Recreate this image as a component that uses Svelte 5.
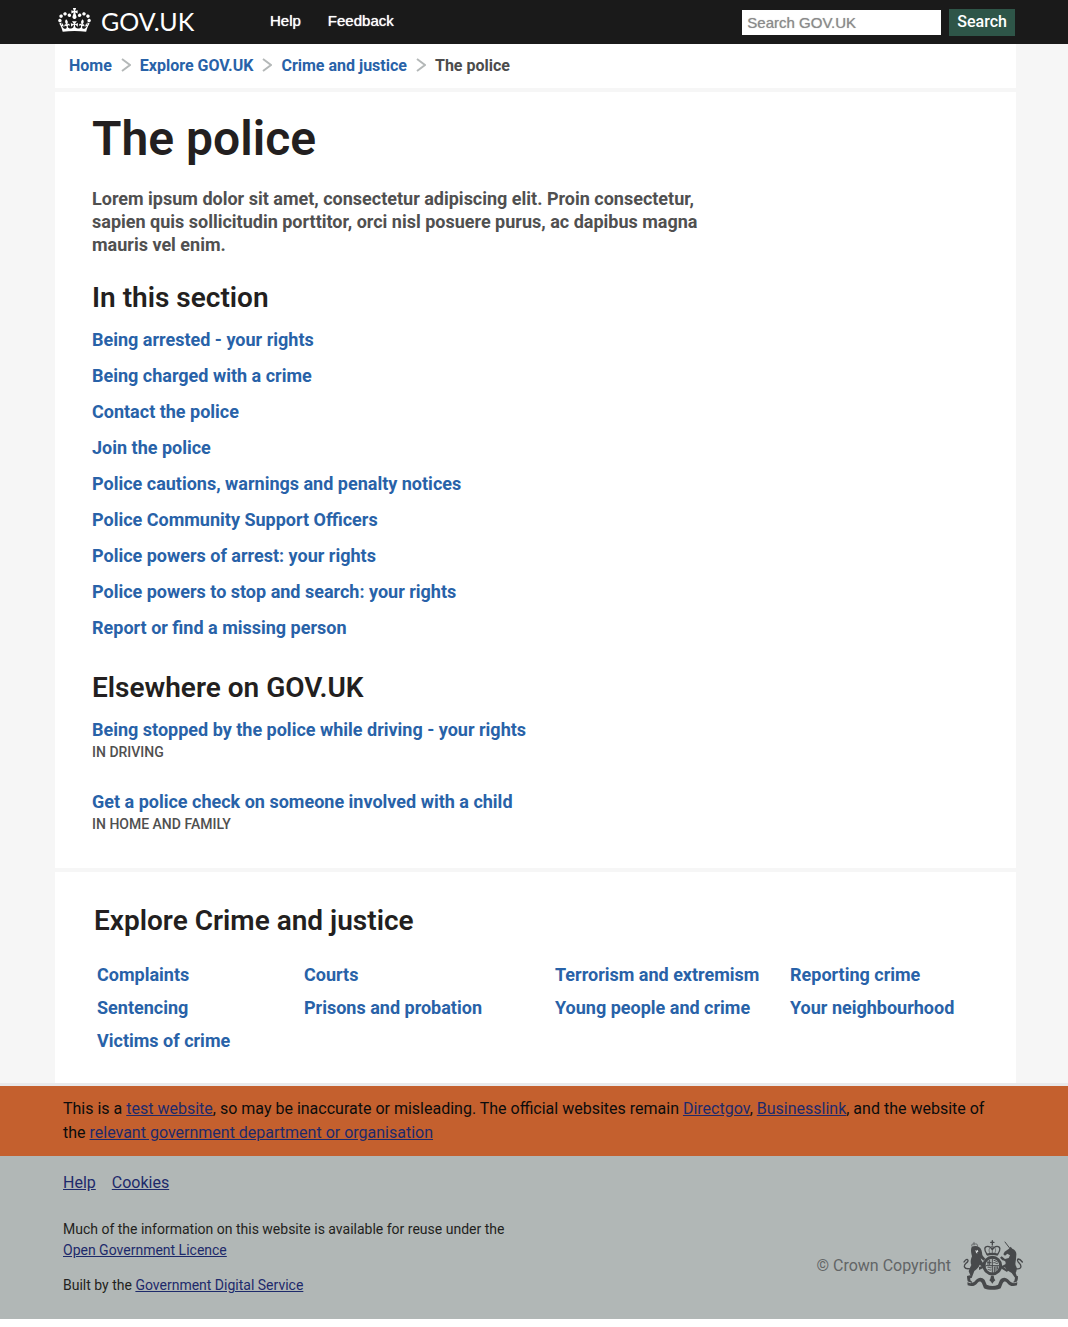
<script>
  const crumbs = ['Home', 'Explore GOV.UK', 'Crime and justice'];
  const section = [
    'Being arrested - your rights',
    'Being charged with a crime',
    'Contact the police',
    'Join the police',
    'Police cautions, warnings and penalty notices',
    'Police Community Support Officers',
    'Police powers of arrest: your rights',
    'Police powers to stop and search: your rights',
    'Report or find a missing person',
  ];
  const elsewhere = [
    { title: 'Being stopped by the police while driving - your rights', place: 'In driving' },
    { title: 'Get a police check on someone involved with a child', place: 'In home and family' },
  ];
  const topics = [
    'Complaints', 'Courts', 'Terrorism and extremism', 'Reporting crime',
    'Sentencing', 'Prisons and probation', 'Young people and crime', 'Your neighbourhood',
    'Victims of crime',
  ];
</script>

<header class="top">
  <a class="logo" href="#home">
    <svg class="crown" viewBox="0 0 132 97" aria-hidden="true">
      <path d="M25 30.2c3.5 1.5 7.7-.2 9.1-3.7 1.5-3.6-.2-7.8-3.9-9.2-3.6-1.4-7.6.3-9.1 3.9-1.4 3.5.3 7.5 3.9 9zM9 39.5c3.6 1.5 7.8-.2 9.2-3.7 1.5-3.6-.2-7.8-3.9-9.1-3.6-1.5-7.6.2-9.1 3.8-1.4 3.5.3 7.5 3.8 9zM4.4 57.2c3.5 1.5 7.7-.2 9.1-3.8 1.5-3.6-.2-7.7-3.9-9.1-3.5-1.5-7.6.3-9.1 3.8-1.4 3.5.3 7.6 3.9 9.1zm38.3-21.4c3.5 1.5 7.7-.2 9.1-3.8 1.5-3.6-.2-7.7-3.9-9.1-3.6-1.5-7.6.3-9.1 3.8-1.3 3.6.4 7.7 3.9 9.1zm64.4-5.6c-3.6 1.5-7.8-.2-9.1-3.7-1.5-3.6.2-7.8 3.8-9.2 3.6-1.4 7.7.3 9.2 3.9 1.3 3.5-.4 7.5-3.9 9zm15.9 9.3c-3.6 1.5-7.7-.2-9.1-3.7-1.5-3.6.2-7.8 3.7-9.1 3.6-1.5 7.7.2 9.2 3.8 1.5 3.5-.3 7.5-3.8 9zm4.7 17.7c-3.6 1.5-7.8-.2-9.2-3.8-1.5-3.6.2-7.7 3.9-9.1 3.6-1.5 7.7.3 9.2 3.8 1.3 3.5-.4 7.6-3.9 9.1zM89.3 35.8c-3.6 1.5-7.8-.2-9.2-3.8-1.4-3.6.2-7.7 3.9-9.1 3.6-1.5 7.7.3 9.2 3.8 1.4 3.6-.3 7.7-3.9 9.1zM69.7 17.7l8.9 4.7V9.3l-8.9 2.8c-.2-.3-.5-.6-.9-.9L72.4 0H59.6l3.5 11.2c-.3.3-.6.5-.9.9l-8.8-2.8v13.1l8.8-4.7c.3.3.6.7.9.9l-5 15.4v.1c-.2.8-.4 1.6-.4 2.4 0 4.1 3.1 7.5 7 8.1h.2c.3 0 .7.1 1 .1.4 0 .7 0 1-.1h.2c4-.6 7.1-4.1 7.1-8.1 0-.8-.1-1.7-.4-2.4V34l-5.1-15.4c.4-.2.7-.6 1-.9zM66 92.8c16.9 0 32.8 1.1 47.1 3.2 4-16.9 8.9-26.7 14-33.5l-9.6-3.4c1 4.9 1.1 7.2 0 10.2-1.5-1.4-3-4.3-4.2-8.7L108.6 76c2.8-2 5-3.2 7.5-3.3-4.4 9.4-10 11.9-13.6 11.2-4.3-.8-6.3-4.6-5.6-7.9 1-4.7 5.7-5.9 8-.5 4.3-8.7-3-11.4-7.6-8.8 7.1-7.2 7.9-13.5 2.1-21.1-8 6.1-8.1 12.3-4.5 20.8-4.7-5.4-12.1-2.5-9.5 6.2 3.4-5.2 7.9-2 7.2 3.1-.6 4.3-6.4 7.8-13.5 7.2-10.3-.9-10.9-8-11.2-13.8 2.5-.5 7.1 1.8 11 7.3L80.2 60c-4.1 4.4-8 5.3-12.3 5.4 1.4-4.4 8-11.6 8-11.6H55.5s6.4 7.2 7.9 11.6c-4.2-.1-8-1-12.3-5.4l1.4 16.4c3.9-5.5 8.5-7.7 10.9-7.3-.3 5.8-.9 12.8-11.1 13.8-7.2.6-12.9-2.9-13.5-7.2-.7-5 3.8-8.3 7.1-3.1 2.7-8.7-4.6-11.6-9.4-6.2 3.7-8.5 3.6-14.7-4.6-20.8-5.8 7.6-5 13.9 2.2 21.1-4.7-2.6-11.9.1-7.7 8.8 2.3-5.5 7.1-4.2 8.1.5.7 3.3-1.3 7.1-5.7 7.9-3.5.7-9-1.8-13.5-11.2 2.5.1 4.7 1.3 7.5 3.3l-4.7-15.4c-1.2 4.4-2.7 7.2-4.3 8.7-1.1-3-.9-5.3 0-10.2l-9.5 3.4c5 6.9 9.9 16.7 14 33.5 14.8-2.1 30.8-3.2 47.7-3.2z" />
    </svg>
    <span>GOV.UK</span>
  </a>
  <nav class="help" aria-label="Support">
    <a href="#help">Help</a>
    <a href="#feedback">Feedback</a>
  </nav>
  <form class="search" onsubmit={(e) => e.preventDefault()}>
    <input type="search" aria-label="Search GOV.UK" placeholder="Search GOV.UK" />
    <button type="submit">Search</button>
  </form>
</header>

<div class="page">
  <nav class="crumbs" aria-label="Breadcrumb">
    <ol>
      {#each crumbs as crumb}
        <li>
          <a href="#crumb">{crumb}</a>
          <svg viewBox="0 0 10 14" aria-hidden="true"><path d="M1 1l8 6-8 6" /></svg>
        </li>
      {/each}
      <li aria-current="page">The police</li>
    </ol>
  </nav>

  <main>
    <h1>The police</h1>
    <p class="intro">
      Lorem ipsum dolor sit amet, consectetur adipiscing elit. Proin consectetur, sapien quis
      sollicitudin porttitor, orci nisl posuere purus, ac dapibus magna mauris vel enim.
    </p>
    <h2>In this section</h2>
    <ul class="links">
      {#each section as title}
        <li><a href="#guide">{title}</a></li>
      {/each}
    </ul>
    <h2>Elsewhere on GOV.UK</h2>
    <ul class="elsewhere">
      {#each elsewhere as item}
        <li>
          <a href="#guide">{item.title}</a>
          <span>{item.place}</span>
        </li>
      {/each}
    </ul>
  </main>

  <section class="explore">
    <h2>Explore Crime and justice</h2>
    <ul>
      {#each topics as topic}
        <li><a href="#topic">{topic}</a></li>
      {/each}
    </ul>
  </section>
</div>

<aside class="notice">
  <p>
    This is a <a href="#test">test website</a>, so may be inaccurate or misleading. The official
    websites remain <a href="#directgov">Directgov</a>, <a href="#businesslink">Businesslink</a>,
    and the website of the <a href="#department">relevant government department or organisation</a>
  </p>
</aside>

<footer>
  <div class="info">
    <nav aria-label="Footer">
      <a href="#help">Help</a>
      <a href="#cookies">Cookies</a>
    </nav>
    <p>
      Much of the information on this website is available for reuse under the
      <a href="#licence">Open Government Licence</a>
    </p>
    <p>Built by the <a href="#gds">Government Digital Service</a></p>
  </div>
  <div class="copyright">
    <span>© Crown Copyright</span>
    <svg viewBox="39 30 180 150" aria-hidden="true">
      <g fill="none" stroke="#47494b" stroke-width="4" stroke-linecap="round" stroke-linejoin="round">
        <!-- crown -->
        <path d="M127 32v12M122 37h10M111 73c-10-14-8-24 2-24 8 0 12 6 14 10 2-4 6-10 14-10 10 0 12 10 2 24" />
        <path d="M120 70c-5-9-4-16 7-22 11 6 12 13 7 22M127 48v22" stroke-width="2" />
        <!-- shield -->
        <circle cx="127" cy="107" r="25" stroke-width="9" />
        <path d="M127 86v42M108 107h38M114 93v11M119 90v14M113 98h10M132 91c5 0 7 5 10 5M131 98c5-2 7 4 11 3M114 112c4-2 5 3 9 1M114 119c4-2 5 3 9 1M133 111v14M138 110v13M143 110v7" stroke-width="3" />
        <!-- tails -->
        <path d="M58 116c-17 2-18-9-10-16 5-4 9-9 3-12-4-1-7 5-9 8" />
        <path d="M197 116c19 4 18-9 11-16-6-6-7-12-3-13 5 0 9 5 12 9" />
        <!-- small lion crown and unicorn horn -->
        <path d="M66 49c-3-7 1-8 8-7 7-1 10 1 8 7M72 37v8" stroke-width="2" />
        <path d="M165 36l16 21" stroke-width="3" />
        <!-- hind legs -->
        <path d="M54 140l2 12 8 4M202 140l-2 12-8 4" />
      </g>
      <g fill="#47494b">
        <path d="M109 71c12-4 24-4 36 0l-2 6c-11-3-21-3-32 0z" />
        <!-- lion -->
        <path d="M65 51c6-4 16-4 22 0 8 5 9 15 10 24 3 5 6 8 9 11l-5 6-9-7c1 8 9 14 12 22l-6 4-9-7c-3 8-9 14-16 19l-8 21-8 1 4-9-5-12c2-8 5-13 8-19-4-10-1-19 2-26-2-8-5-18-1-28z" />
        <path d="M87 111l18-6 2 6-20 9zM51 138l9-2 1 15 6 7-14-4z" />
        <!-- unicorn -->
        <path d="M177 56l5-6 5 6c7 2 13 10 12 18l-1 14c-1 8-4 15 1 22 3 6 1 13-2 19l6 16-3 10-7-1 2-11-10-14c-9-5-17-10-20-17l-10 3-1-6 12-6c3-7-1-11-9-12l-7-8 5-4 10 8 11-3 4-8-8-5-7 6-5-4 4-8z" />
        <path d="M150 113l6-4 19 12-4 5z" />
        <!-- scroll and rose -->
        <path d="M52 157c11 5 19 2 25-6 8-9 18-12 27-1l6 14c12 5 23 5 34 0l6-14c9-11 19-8 27 1 6 8 14 11 25 6l-1 9c-14 5-23 1-30-8-5-5-10-4-13 2l-6 15c-12 6-38 6-50 0l-6-15c-3-6-8-7-13-2-7 9-16 13-30 8z" />
        <path d="M123 137h8l2 9 3 5-5 4-4 6-4-6-5-4 3-5z" />
      </g>
      <path d="M76 60l4 2 3-3 2 7-4 1 1 4-4-3z" fill="#d2d6d6" />
    </svg>
  </div>
</footer>

<style>
  :global(body) {
    margin: 0;
    background: #fff;
    font-family: Roboto, 'Liberation Sans', sans-serif;
    color: #231f20;
  }
  ul,
  ol {
    list-style: none;
    margin: 0;
    padding: 0;
  }
  h1,
  h2,
  p {
    margin: 0;
  }
  .top {
    display: flex;
    align-items: center;
    height: 44px;
    padding: 0 53px 0 58px;
    background: #1a1a1a;
  }
  .logo {
    display: flex;
    align-items: center;
    gap: 10px;
    width: 212px;
    color: #fff;
    font: 400 25px/42px Lato, sans-serif;
    text-decoration: none;
  }
  .logo span {
    padding-bottom: 2px;
  }
  .crown {
    width: 33px;
    height: 24px;
    margin-bottom: 4px;
    fill: #fff;
  }
  .help {
    display: flex;
    gap: 27px;
    padding-bottom: 2px;
  }
  .help a {
    color: #fff;
    font: 400 15px/40px 'Liberation Sans', sans-serif;
    text-decoration: none;
    text-shadow: 0 0 1px #fff;
  }
  .search {
    display: flex;
    align-items: center;
    gap: 8px;
    margin-left: auto;
  }
  .search input {
    box-sizing: border-box;
    width: 199px;
    height: 25px;
    padding: 0 5px;
    border: 0;
    border-radius: 0;
    background: #fff;
    font: 400 15px/25px 'Liberation Sans', sans-serif;
    appearance: none;
  }
  .search input::placeholder {
    color: #8a8a8a;
    text-shadow: 0 0 1px #aaa;
  }
  .search button {
    height: 27px;
    padding: 0 8px;
    border: 0;
    background: #2e5548;
    color: #fff;
    font: 500 16px/26px Roboto, sans-serif;
  }
  .page {
    display: grid;
    gap: 4px;
    padding: 0 52px 0 55px;
    border-bottom: 3px solid #e9e9eb;
    background: #f6f6f6;
  }
  .page > * {
    background: #fff;
  }
  .page a {
    color: #2862a8;
    font-weight: 700;
    text-decoration: none;
  }
  .crumbs ol {
    display: flex;
    padding: 0 14px;
    font-size: 16px;
    line-height: 44px;
    font-weight: 700;
    color: #4c4c4c;
  }
  .crumbs li {
    display: flex;
    align-items: center;
  }
  .crumbs svg {
    width: 10px;
    height: 14px;
    margin: 0 9px 3px;
    fill: none;
    stroke: #b4b8b8;
    stroke-width: 2;
  }
  main {
    padding: 20px 37px 34px;
  }
  h1 {
    font-size: 48px;
    line-height: 54px;
    font-weight: 600;
  }
  .intro {
    max-width: 620px;
    margin-top: 21px;
    color: #505050;
    font-size: 18px;
    line-height: 23px;
    font-weight: 700;
  }
  h2 {
    font-size: 28px;
    line-height: 36px;
    font-weight: 600;
  }
  main h2 {
    margin-top: 24px;
  }
  .links {
    margin-top: 6px;
    font-size: 18px;
    line-height: 36px;
  }
  .elsewhere {
    display: grid;
    gap: 28px;
    margin-top: 12px;
    font-size: 18px;
    line-height: 24px;
  }
  .elsewhere a,
  .elsewhere span {
    display: block;
  }
  .elsewhere span {
    color: #505050;
    font-size: 14px;
    line-height: 20px;
    font-weight: 500;
    text-transform: uppercase;
  }
  .explore {
    padding: 31px 39px 26px;
  }
  .explore ul {
    display: grid;
    grid-template-columns: 207fr 251fr 235fr 187fr;
    margin: 19px 0 0 3px;
    font-size: 18px;
    line-height: 33px;
  }
  .notice {
    padding: 11px 63px;
    background: #c4602e;
    color: #0b0c0c;
    font-size: 16px;
    line-height: 24px;
  }
  .notice a,
  footer a {
    color: #1d2a6b;
  }
  footer {
    display: flex;
    justify-content: space-between;
    align-items: flex-end;
    margin-bottom: 8px;
    padding: 14px 45px 23px 63px;
    background: #b1b7b6;
    font-size: 14px;
    line-height: 21px;
  }
  .info {
    max-width: 460px;
  }
  .info nav {
    display: flex;
    gap: 16px;
    margin-bottom: 24px;
    font-size: 16px;
    line-height: 25px;
  }
  .info p + p {
    margin-top: 14px;
  }
  .copyright {
    display: flex;
    align-items: center;
    gap: 12px;
    margin-bottom: 6px;
    color: #626566;
    font-size: 16px;
  }
  .copyright svg {
    width: 60px;
    height: 50px;
  }
</style>
